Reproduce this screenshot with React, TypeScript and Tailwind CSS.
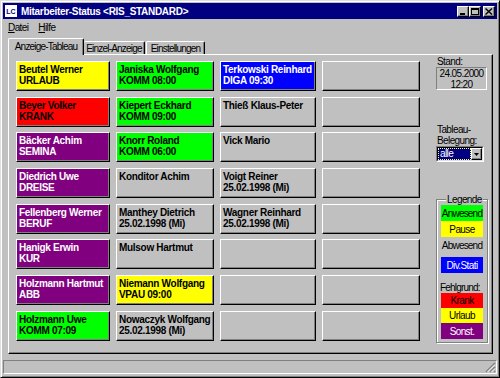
import React from "react";

const tone = {
  y: "bg-[#ffff00] text-black",
  g: "bg-[#00ff00] text-black",
  b: "bg-[#0000ff] text-white",
  r: "bg-[#ff0000] text-black",
  p: "bg-[#800080] text-white",
  n: "bg-[#c0c0c0] text-black",
};

type Cell = { name?: string; info?: string; c: keyof typeof tone };

const cells: Cell[] = [
  { name: "Beutel Werner", info: "URLAUB", c: "y" },
  { name: "Janiska Wolfgang", info: "KOMM 08:00", c: "g" },
  { name: "Terkowski Reinhard", info: "DIGA 09:30", c: "b" },
  { c: "n" },
  { name: "Beyer Volker", info: "KRANK", c: "r" },
  { name: "Kiepert Eckhard", info: "KOMM 09:00", c: "g" },
  { name: "Thieß Klaus-Peter", c: "n" },
  { c: "n" },
  { name: "Bäcker Achim", info: "SEMINA", c: "p" },
  { name: "Knorr Roland", info: "KOMM 06:00", c: "g" },
  { name: "Vick Mario", c: "n" },
  { c: "n" },
  { name: "Diedrich Uwe", info: "DREISE", c: "p" },
  { name: "Konditor Achim", c: "n" },
  { name: "Voigt Reiner", info: "25.02.1998 (Mi)", c: "n" },
  { c: "n" },
  { name: "Fellenberg Werner", info: "BERUF", c: "p" },
  { name: "Manthey Dietrich", info: "25.02.1998 (Mi)", c: "n" },
  { name: "Wagner Reinhard", info: "25.02.1998 (Mi)", c: "n" },
  { c: "n" },
  { name: "Hanigk Erwin", info: "KUR", c: "p" },
  { name: "Mulsow Hartmut", c: "n" },
  { c: "n" },
  { c: "n" },
  { name: "Holzmann Hartmut", info: "ABB", c: "p" },
  { name: "Niemann Wolfgang", info: "VPAU 09:00", c: "y" },
  { c: "n" },
  { c: "n" },
  { name: "Holzmann Uwe", info: "KOMM 07:09", c: "g" },
  { name: "Nowaczyk Wolfgang", info: "25.02.1998 (Mi)", c: "n" },
  { c: "n" },
  { c: "n" },
];

const raised =
  "border border-t-white border-l-white border-r-black border-b-black shadow-[inset_-1px_-1px_0_#808080]";
const sunken = "border border-t-[#808080] border-l-[#808080] border-r-white border-b-white";

function CapBtn({ children }: { children: React.ReactNode }) {
  return (
    <div className={`w-[12px] h-[11px] bg-[#c0c0c0] ${raised} flex items-center justify-center`}>
      {children}
    </div>
  );
}

export default function App() {
  return (
    <div className="w-[500px] h-[378px] bg-[#c0c0c0] border border-t-[#dfdfdf] border-l-[#dfdfdf] border-r-black border-b-black shadow-[inset_1px_1px_0_white,inset_-1px_-1px_0_#808080] p-[2px] flex flex-col font-['Liberation_Sans',Arial,sans-serif] text-[10px] tracking-[-0.6px] text-black overflow-hidden">
      {/* Title bar */}
      <div className="h-[16px] bg-[#000080] flex items-center pl-[1px] pr-[2px]">
        <div className="w-[14px] h-[14px] bg-white border border-[#000080] flex items-center justify-center text-[7px] font-bold leading-none tracking-normal text-[#000080]">
          LC
        </div>
        <span className="ml-[3px] text-white font-bold text-[10px] tracking-[-0.3px]">
          Mitarbeiter-Status &lt;RIS_STANDARD&gt;
        </span>
        <div className="ml-auto flex items-center">
          <CapBtn>
            <div className="w-[5px] h-[2px] bg-black mt-[5px] -ml-[1px]" />
          </CapBtn>
          <CapBtn>
            <div className="w-[8px] h-[7px] border border-black border-t-2" />
          </CapBtn>
          <div className="w-[2px]" />
          <CapBtn>
            <svg width="8" height="7" viewBox="0 0 8 7">
              <path d="M0.5 0.5 L7 6.5 M7 0.5 L0.5 6.5" stroke="black" strokeWidth="1.4" />
            </svg>
          </CapBtn>
        </div>
      </div>

      {/* Menu */}
      <div className="h-[17px] flex items-center pl-[5px] gap-[10px]">
        <span>
          <span className="underline">D</span>atei
        </span>
        <span>
          <span className="underline">H</span>ilfe
        </span>
      </div>

      {/* Tabs */}
      <div className="h-[18px] flex items-end pl-[5px] tracking-[-0.8px]">
        <div className="relative z-10 -mb-px h-[17px] w-[76px] bg-[#c0c0c0] border-t border-l border-r border-t-white border-l-white border-r-black shadow-[inset_-1px_0_0_#808080] rounded-t-[2px] flex items-center justify-center pb-[2px]">
          Anzeige-Tableau
        </div>
        <div className="h-[13px] w-[61px] border-t border-r border-t-white border-r-black shadow-[inset_-1px_0_0_#808080] rounded-t-[2px] flex items-center justify-center">
          Einzel-Anzeige
        </div>
        <div className="ml-[1px] h-[13px] w-[59px] border-t border-l border-r border-t-white border-l-white border-r-black shadow-[inset_-1px_0_0_#808080] rounded-t-[2px] flex items-center justify-center">
          Einstellungen
        </div>
      </div>

      {/* Panel */}
      <div className={`h-[300px] w-[485px] ml-[5px] ${raised} flex`}>
        <div className="pl-[7px] pt-[6px] grid grid-cols-[94px_98px_96px_98px] gap-x-[6px] gap-y-[5.7px] content-start">
          {cells.map((cell, i) => (
            <div
              key={i}
              className={`h-[30px] ${raised} ${tone[cell.c]} px-[2px] pt-[2px] font-bold text-[10px] leading-[11px] tracking-[-0.3px] whitespace-nowrap overflow-hidden`}
            >
              {cell.name && <div>{cell.name}</div>}
              {cell.info && <div>{cell.info}</div>}
            </div>
          ))}
        </div>

        <div className="ml-[16px] w-[52px] flex flex-col pt-[1px] leading-[11px]">
          <div className="pl-[1px]">Stand:</div>
          <div className={`h-[23px] w-[51px] ${sunken} flex flex-col items-center justify-center`}>
            <div>24.05.2000</div>
            <div>12:20</div>
          </div>

          <div className="mt-[34px] pl-[1px]">Tableau-</div>
          <div className="pl-[1px]">Belegung:</div>
          <div className="h-[16px] w-[48px] border border-t-[#808080] border-l-[#808080] border-r-white border-b-white">
            <div className="h-full border border-t-black border-l-black border-r-[#dfdfdf] border-b-[#dfdfdf] bg-white flex">
              <div className="flex-1 bg-[#000080] text-white border border-dotted border-[#ffff80] leading-[10px] pl-[1px] overflow-hidden">
                alle
              </div>
              <div className={`w-[11px] bg-[#c0c0c0] ${raised} flex items-center justify-center`}>
                <svg width="5" height="3" viewBox="0 0 5 3">
                  <path d="M0 0 H5 L2.5 3 Z" fill="black" />
                </svg>
              </div>
            </div>
          </div>

          <fieldset className="mt-[32px] w-[52px] border border-[#808080] shadow-[1px_1px_0_white,inset_1px_1px_0_white] px-[4px] pb-[3px]">
            <legend className="ml-[5px] px-[1px] bg-[#c0c0c0] leading-[11px]">Legende</legend>
            <div className="h-[16px] bg-[#00ff00] flex items-center justify-center tracking-[-0.8px]">Anwesend</div>
            <div className="h-[16px] bg-[#ffff00] flex items-center justify-center">Pause</div>
            <div className="h-[16px] flex items-center justify-center tracking-[-0.8px]">Abwesend</div>
            <div className="mt-[4px] h-[16px] bg-[#0000ff] text-white flex items-center justify-center">Div.Stati</div>
            <div className="mt-[10px] h-[10px] leading-[10px] -ml-[1px] tracking-[-0.8px]">Fehlgrund:</div>
            <div className="h-[15px] bg-[#ff0000] flex items-center justify-center">Krank</div>
            <div className="h-[15px] bg-[#ffff00] flex items-center justify-center">Urlaub</div>
            <div className="h-[16px] bg-[#800080] text-white flex items-center justify-center">Sonst.</div>
          </fieldset>
        </div>
      </div>

      {/* Status bar */}
      <div className={`relative mt-[6px] h-[14px] ${sunken}`}>
        <svg className="absolute right-0 bottom-0" width="11" height="11" viewBox="0 0 11 11">
          <path d="M10 1 L1 10 M10 5 L5 10 M10 9 L9 10" stroke="#808080" strokeWidth="1.5" />
          <path d="M10 2.5 L2.5 10 M10 6.5 L6.5 10" stroke="white" strokeWidth="1" />
        </svg>
      </div>
    </div>
  );
}
